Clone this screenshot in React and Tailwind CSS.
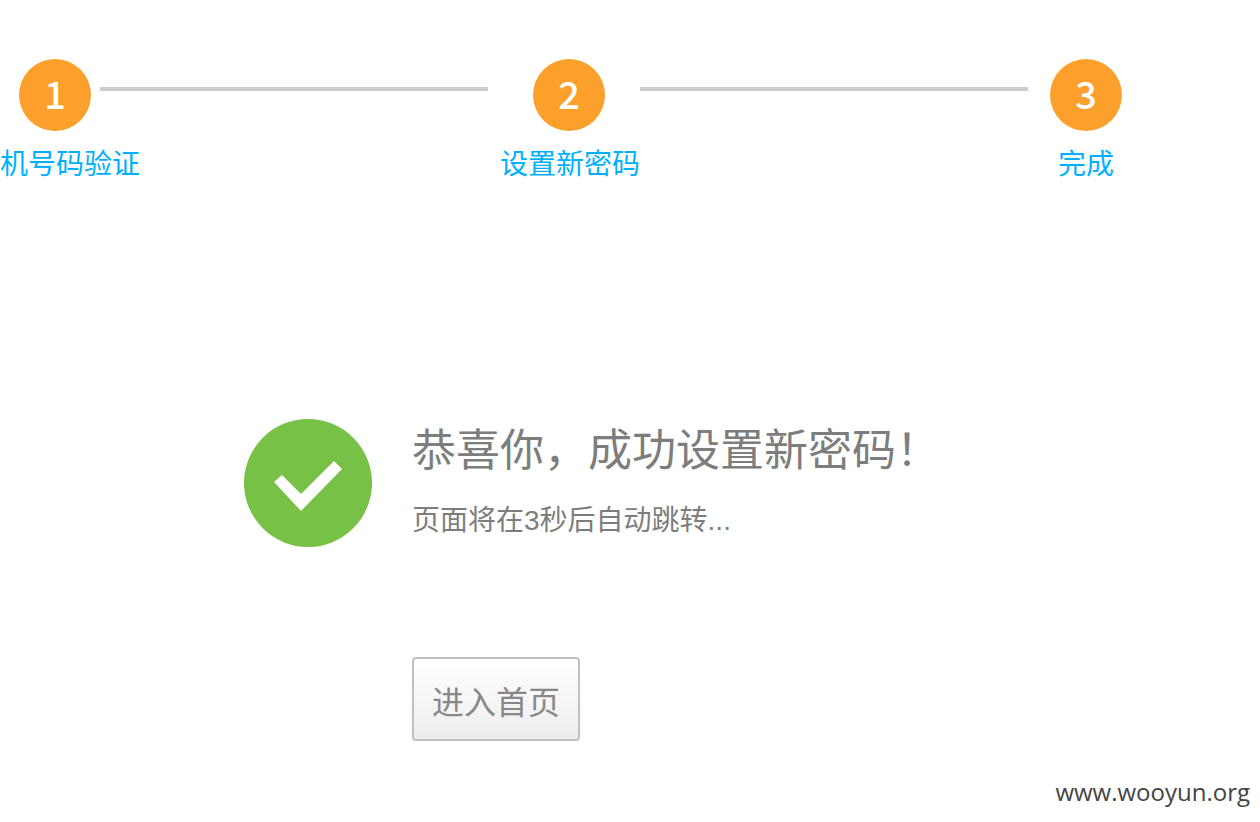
import React from "react";
import { clsx } from "clsx";

const steps = [
  { id: 1, label: "机号码验证", width: "w-[100px]", align: "items-start", badge: "ml-[19px]" },
  { id: 2, label: "设置新密码", width: "w-[152px] pl-3", align: "items-center", badge: "mr-0.5" },
  { id: 3, label: "完成", width: "w-[116px]", align: "items-center", badge: "" },
];

function Step({ step }) {
  return (
    <li className={clsx("flex flex-col shrink-0 whitespace-nowrap", step.width, step.align)}>
      <span
        className={clsx(
          "flex items-center justify-center w-[72px] h-[72px] rounded-full bg-[#fca02b] pb-1",
          "font-['Noto_Sans_CJK_SC',sans-serif] text-[38px] leading-none font-medium text-white",
          step.badge
        )}
      >
        {step.id}
      </span>
      <span className="mt-3.5 text-[28px] leading-10 text-[#00b0ff]">{step.label}</span>
    </li>
  );
}

function Steps() {
  return (
    <ol className="flex pt-[59px] pr-[116px]">
      {steps.map((step, i) => (
        <React.Fragment key={step.id}>
          {i > 0 && <li aria-hidden="true" className="flex-1 h-1 mt-7 bg-[#cccccc]" />}
          <Step step={step} />
        </React.Fragment>
      ))}
    </ol>
  );
}

function SuccessIcon() {
  return (
    <svg viewBox="0 0 128 128" className="w-32 h-32 shrink-0" aria-hidden="true">
      <circle cx="64" cy="64" r="64" fill="#77c146" />
      <path d="M30 63 L38 56 L57 75 L90 42 L98 50 L57 92 Z" fill="#fff" />
    </svg>
  );
}

export default function App() {
  return (
    <div className="bg-white font-['Liberation_Sans','Noto_Sans_CJK_SC',sans-serif]">
      <Steps />
      <main className="flex items-start gap-10 mt-[234px] pl-[244px]">
        <SuccessIcon />
        <div>
          <h1 className="pt-0.5 text-[44px] leading-[60px] text-[#7d7d7d]">恭喜你，成功设置新密码！</h1>
          <p className="mt-5 text-[28px] leading-10 text-[#7d7d7d]">页面将在3秒后自动跳转...</p>
          <button
            type="button"
            className="mt-[116px] px-[18px] pt-5 pb-3 rounded border-2 border-[#c0c0c0] bg-linear-to-b from-white to-[#ededed] text-[32px] leading-[48px] text-[#888888] cursor-pointer"
          >
            进入首页
          </button>
        </div>
      </main>
      <footer className="flex justify-end mt-[35px] pr-2.5 font-['Open_Sans',sans-serif] text-[24px] leading-8 text-[#444444]">
        www.wooyun.org
      </footer>
    </div>
  );
}
